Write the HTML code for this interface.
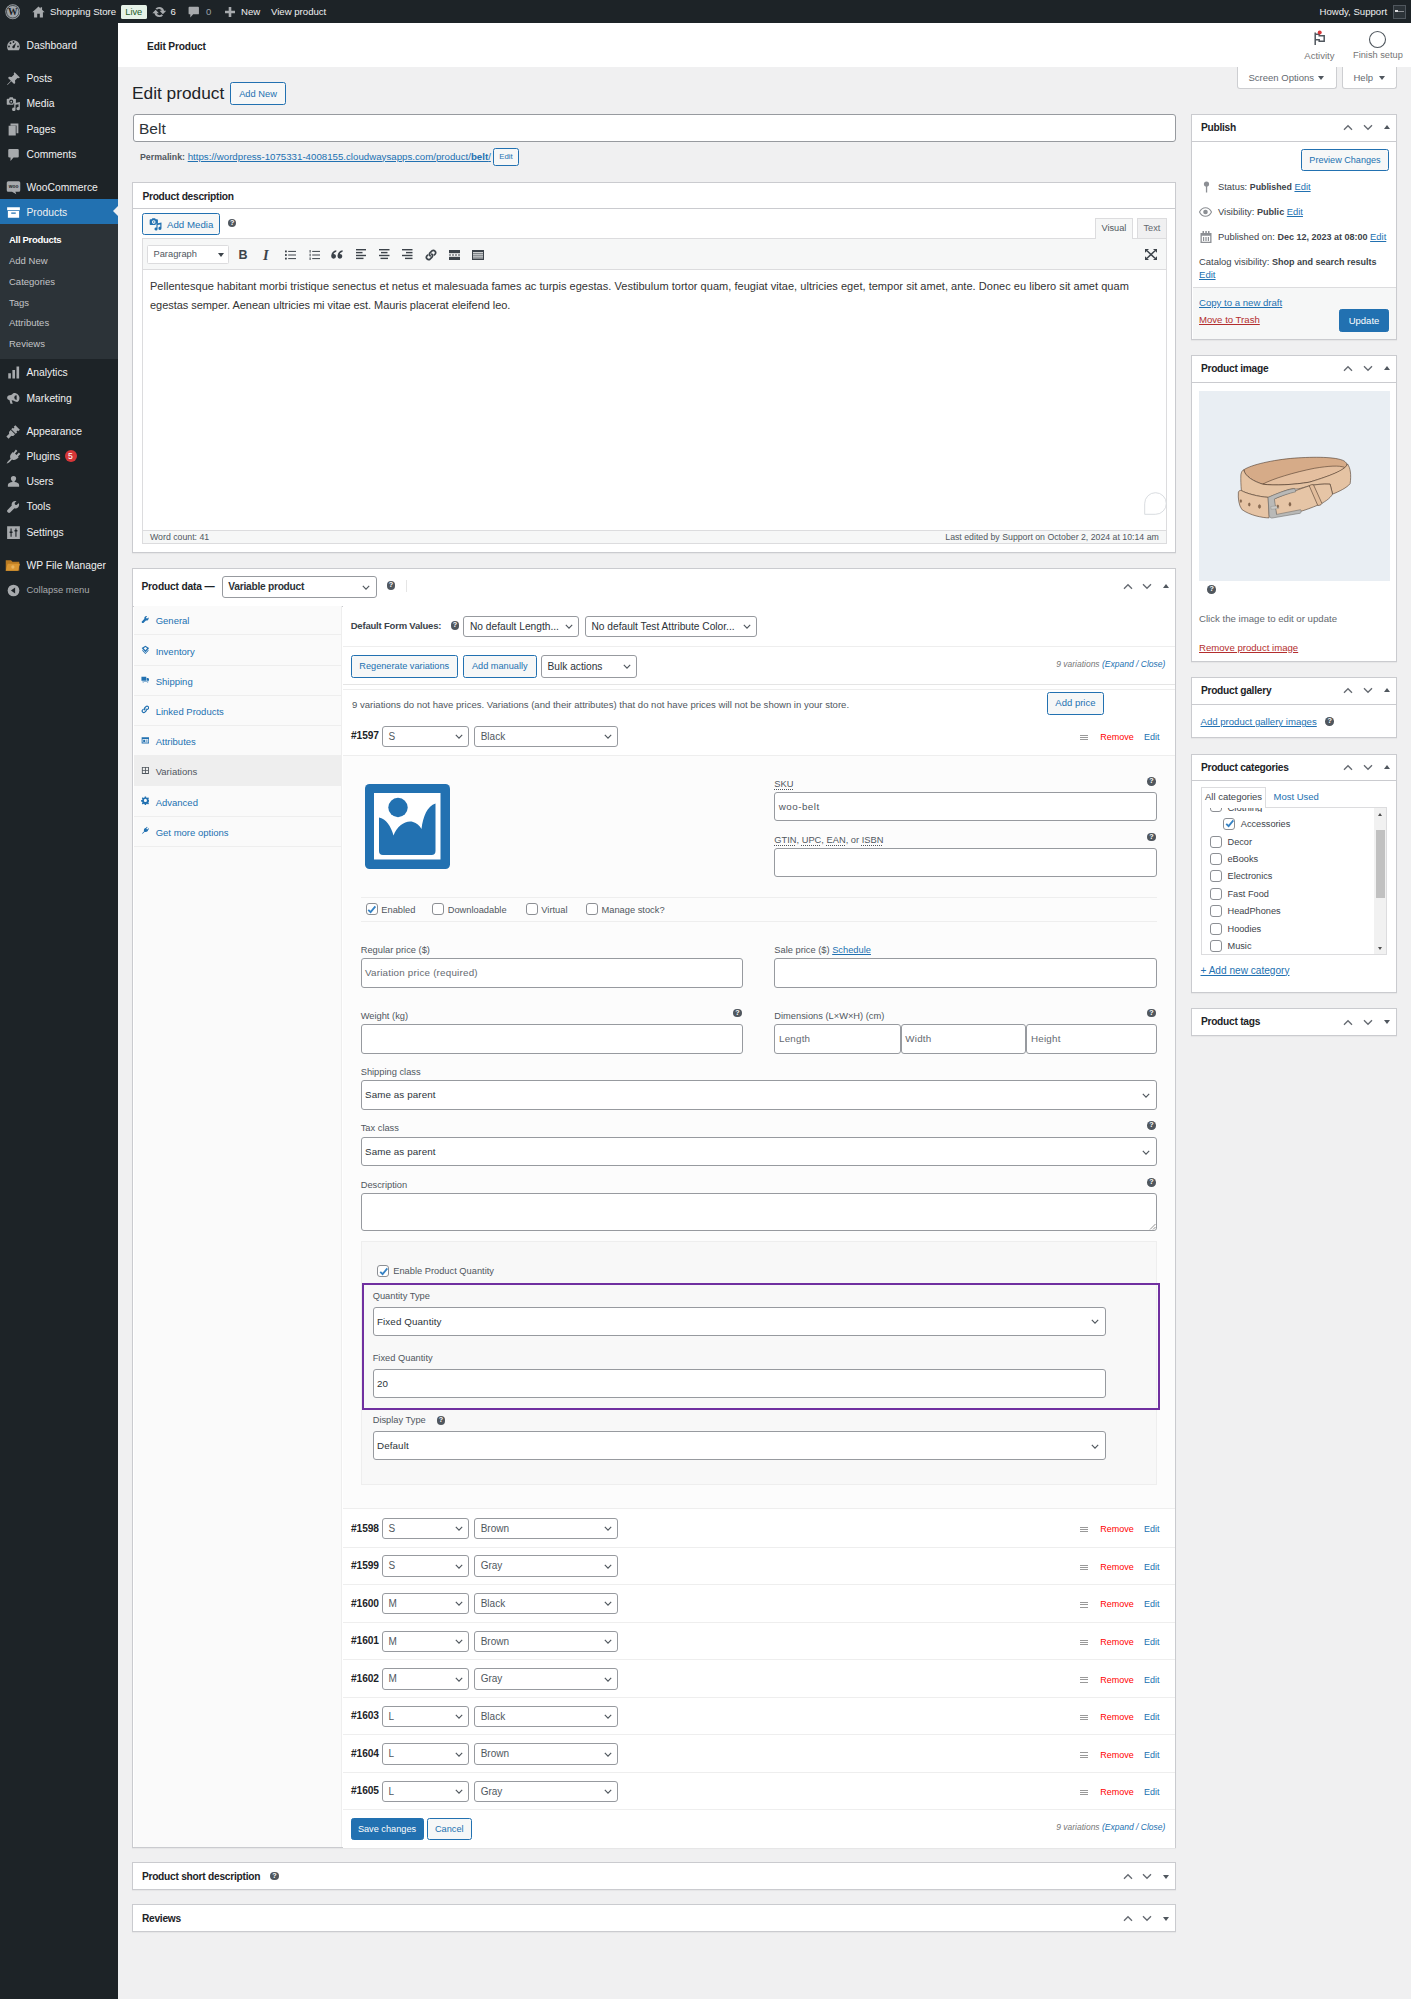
<!DOCTYPE html>
<html lang="en">
<head>
<meta charset="utf-8">
<title>Edit product ‹ Shopping Store — WordPress</title>
<style>
*{box-sizing:border-box;margin:0;padding:0}
html,body{width:1412px;height:1999px;overflow:hidden}
body{background:#f0f0f1;font-family:"Liberation Sans",sans-serif;font-size:9.5px;color:#3c434a;position:relative;line-height:1.2}
a{color:#2271b1;text-decoration:underline}
.abs{position:absolute}
.t{position:absolute;white-space:nowrap;line-height:1}
svg{display:block}
/* admin bar */
#adminbar{position:absolute;left:0;top:0;width:1411px;height:23px;background:#1d2327;color:#f0f0f1}
#adminbar .t{font-size:9.6px;color:#f0f0f1;top:7px}
/* sidebar */
#menu{position:absolute;left:0;top:23px;width:117.5px;height:1976px;background:#1d2327}
#menu .mi{position:absolute;left:0;width:117.5px;height:25px;color:#f0f0f1;font-size:10.3px}
#menu .mi .lbl{position:absolute;left:26.5px;top:8px;line-height:1;white-space:nowrap}
#menu .mi svg{position:absolute;left:6px;top:5px;width:15px;height:15px;fill:#a7aaad}
#menu .sub{position:absolute;left:0;top:201px;width:117.5px;height:135px;background:#2c3338}
#menu .sub .t{left:9px;font-size:9.5px;color:#c3c4c7}
/* boxes */
.box{position:absolute;background:#fff;border:1px solid #cacbcf;box-shadow:0 1px 1px rgba(0,0,0,.04)}
.box .hd{position:absolute;left:0;top:0;right:0;border-bottom:1px solid #cacbcf}
.box .hd .ttl{position:absolute;left:9px;font-weight:bold;font-size:10.2px;color:#1d2327;line-height:1;white-space:nowrap}
.inp{position:absolute;background:#fff;border:1px solid #979a9f;border-radius:3px}
.btn2{position:absolute;border:1px solid #2271b1;border-radius:2.5px;background:#f6f7f7;color:#2271b1;text-align:center;white-space:nowrap}
.btn1{position:absolute;border:1px solid #2271b1;border-radius:2.5px;background:#2271b1;color:#fff;text-align:center;white-space:nowrap}
.tip{position:absolute;width:8.600px;height:8.600px;margin:0.200px;border-radius:50%;background:#50575e;color:#fff;font-size:7.200px;font-weight:bold;line-height:8.800px;text-align:center}
.chev{position:absolute}
.cb{position:absolute;width:12px;height:12px;border:1px solid #8c8f94;border-radius:3px;background:#fff}
</style>
</head>
<body>
<div id="adminbar">
  <!-- wp logo -->
  <svg class="abs" style="left:4.800px;top:4px;width:15.500px;height:15.500px" viewBox="0 0 20 20"><circle cx="10" cy="10" r="9.600" fill="#a0a5aa"/><circle cx="10" cy="10" r="8.100" fill="none" stroke="#1d2327" stroke-width="0.900"/><text x="10" y="14.300" text-anchor="middle" font-family="Liberation Serif,serif" font-weight="bold" font-size="12.500" fill="#1d2327">W</text></svg>
  <!-- home -->
  <svg class="abs" style="left:32px;top:5.5px;width:13px;height:12px" viewBox="0 0 20 18"><path d="M10 0.5 L0.5 9.5 H3.2 V17.5 H8 V11.5 H12 V17.5 H16.8 V9.5 H19.5 L15.5 5.7 V1.5 H13.2 V3.5 Z" fill="#a7aaad"/></svg>
  <span class="t" style="left:50px">Shopping Store</span>
  <span class="abs" style="left:121px;top:5px;width:25.5px;height:13.5px;background:#e6f2e8;border-radius:1.5px;color:#1c5c27;font-size:9.300px;line-height:15px;text-align:center">Live</span>
  <!-- update -->
  <svg class="abs" style="left:151.500px;top:4.500px;width:14.500px;height:14px" viewBox="0 0 22 20"><path d="M11 2.500a7.500 7.500 0 0 1 7.300 5.700H21.500l-5 5.300-5-5.300h3.200a4 4 0 0 0-7-1.500L5.300 4.800A7.500 7.500 0 0 1 11 2.500zM11 17.500a7.500 7.500 0 0 1-7.300-5.700H0.500l5-5.300 5 5.300H7.300a4 4 0 0 0 7 1.500l2.400 1.900a7.500 7.500 0 0 1-5.700 2.300z" fill="#a7aaad"/></svg>
  <span class="t" style="left:170.5px">6</span>
  <!-- comment -->
  <svg class="abs" style="left:188px;top:6px;width:11.5px;height:12px" viewBox="0 0 20 20"><path d="M2.5 1h15A1.5 1.5 0 0 1 19 2.500v10a1.500 1.500 0 0 1-1.500 1.500H9l-5 5.500V14H2.500A1.500 1.500 0 0 1 1 12.500v-10A1.500 1.500 0 0 1 2.500 1z" fill="#a7aaad"/></svg>
  <span class="t" style="left:206px;color:#9ca2a7">0</span>
  <!-- plus -->
  <svg class="abs" style="left:224.5px;top:7px;width:10px;height:10px" viewBox="0 0 10 10"><path d="M3.7 0h2.6v3.700H10v2.600H6.300V10H3.700V6.300H0V3.700h3.700z" fill="#a7aaad"/></svg>
  <span class="t" style="left:241px">New</span>
  <span class="t" style="left:271px">View product</span>
  <span class="t" style="left:1319.5px">Howdy, Support</span>
  <span class="abs" style="left:1393px;top:4.500px;width:13px;height:14px;border:1px solid #50575e;background:#2c3338"></span>
  <span class="abs" style="left:1395px;top:10.5px;width:9px;height:1px;background:#8c8f94"></span>
  <span class="abs" style="left:1395px;top:10px;width:2.5px;height:2px;background:#dcdcde"></span>
</div>

<div id="menu">
<div class="abs" style="left:0;top:176px;width:117.5px;height:25px;background:#2271b1"></div>
<div class="abs" style="left:112.5px;top:183px;width:0;height:0;border:5.5px solid transparent;border-right-color:#f0f0f1;border-left-width:0"></div>
<div class="sub">
<span class="t" style="top:11.2px;font-weight:bold;color:#fff;letter-spacing:-0.3px;">All Products</span>
<span class="t" style="top:32.2px;">Add New</span>
<span class="t" style="top:53.2px;">Categories</span>
<span class="t" style="top:73.7px;">Tags</span>
<span class="t" style="top:94.2px;">Attributes</span>
<span class="t" style="top:114.7px;">Reviews</span>
</div>
<div class="mi" style="top:9.5px"><svg viewBox="0 0 20 20" style="fill:#a7aaad"><path d="M10 3a8.500 8.500 0 0 0-8.500 8.500c0 1.800.6 3.500 1.500 4.800h14c.9-1.300 1.500-3 1.500-4.800A8.500 8.500 0 0 0 10 3zM4 12.500a1.200 1.200 0 1 1 0-2.400 1.200 1.200 0 0 1 0 2.400zm2-4.300a1.200 1.200 0 1 1 0-2.400 1.200 1.200 0 0 1 0 2.400zM10 6.500a1.200 1.200 0 1 1 0-2.400 1.200 1.200 0 0 1 0 2.400zm1.300 6.800a1.800 1.800 0 0 1-2.600-2.400l4.800-4.600-2.200 7zM16 12.500a1.200 1.200 0 1 1 0-2.400 1.200 1.200 0 0 1 0 2.400z"/></svg><span class="lbl">Dashboard</span></div>
<div class="mi" style="top:42.5px"><svg viewBox="0 0 20 20" style="fill:#a7aaad"><path d="M11.500 1.500l7 7-1.500 1.200-1.700-.5-3.300 3.300.3 3.500-1.500 1.300-3.800-3.800L2 18.500l-.5-.5 5-5-3.800-3.800L4 7.700l3.500.3 3.300-3.300-.5-1.700z"/></svg><span class="lbl">Posts</span></div>
<div class="mi" style="top:67.5px"><svg viewBox="0 0 20 20" style="fill:#a7aaad"><path d="M2.200 3.500h1.800l1-1.700h4l1 1.700h2a1.200 1.200 0 0 1 1.200 1.200v5.300H9.800v1.800H2.200A1.200 1.200 0 0 1 1 10.600V4.700a1.200 1.200 0 0 1 1.200-1.200zM7 4.800a2.700 2.700 0 1 0 0 5.400 2.700 2.700 0 0 0 0-5.400zm0 1.500a1.200 1.200 0 1 1 0 2.400 1.200 1.200 0 0 1 0-2.400z" fill-rule="evenodd"/><path d="M11 9.500l7.500-1.500v8.800a2.300 2.300 0 1 1-1.800-2.200V11l-4 .8v6a2.300 2.300 0 1 1-1.700-2.200z"/></svg><span class="lbl">Media</span></div>
<div class="mi" style="top:93.5px"><svg viewBox="0 0 20 20" style="fill:#a7aaad"><path d="M6 2h10.500v13H14V4.500H6zM3.500 5H13v13H3.500z"/></svg><span class="lbl">Pages</span></div>
<div class="mi" style="top:118.5px"><svg viewBox="0 0 20 20" style="fill:#a7aaad"><path d="M4.500 2.500h11A1.500 1.500 0 0 1 17 4v8.500a1.500 1.500 0 0 1-1.500 1.500H10l-4 4.500V14H4.500A1.500 1.500 0 0 1 3 12.500V4a1.500 1.500 0 0 1 1.500-1.500z"/></svg><span class="lbl">Comments</span></div>
<div class="mi" style="top:151.5px"><svg viewBox="0 0 20 20" style="fill:#a7aaad"><path d="M3 1.500h14A2 2 0 0 1 19 3.500v10a2 2 0 0 1-2 2H12.500l1.200 3.500L8 15.500H3A2 2 0 0 1 1 13.500v-10A2 2 0 0 1 3 1.500z"/><text x="10" y="10.800" text-anchor="middle" font-size="6.500" font-weight="bold" fill="#1d2327" font-family="Liberation Sans,sans-serif">woo</text></svg><span class="lbl">WooCommerce</span></div>
<div class="mi" style="top:176.5px"><svg viewBox="0 0 20 20" style="fill:#fff"><path d="M1.500 3h17v4h-17zM2.500 8h15v9h-15zM7 10v1.800h6V10z" fill-rule="evenodd"/></svg><span class="lbl">Products</span></div>
<div class="mi" style="top:336.5px"><svg viewBox="0 0 20 20" style="fill:#a7aaad"><path d="M14 2h3.500v16H14zM8.500 6.500H12V18H8.500zM3 11h3.500v7H3z"/></svg><span class="lbl">Analytics</span></div>
<div class="mi" style="top:362.5px"><svg viewBox="0 0 20 20" style="fill:#a7aaad"><path d="M11 2.500c3.500 0 7 3 7 6.500s-1.500 5.500-3 5.500c-2 0-4.500-2-7.500-2.300L9 17H6l-1.500-5C2.500 11.500 1.500 10.500 1.500 9c0-2 1.500-3 3-3.200C8 5.500 9 2.500 11 2.500zm3.200 3a3.200 3.200 0 0 0 0 6.400z"/></svg><span class="lbl">Marketing</span></div>
<div class="mi" style="top:395.5px"><svg viewBox="0 0 20 20" style="fill:#a7aaad"><path d="M12.500 1.500l6 6-2.200 2.200-1-1-1.300 1.300 1 1L13 13l-6-6 2-2 1 1 1.300-1.300-1-1zM6.300 8l5.700 5.700-1.500 1.500c-1 1-2.500 1-3.500.5L3.500 19.500l-3-3L4.300 13c-.5-1-.5-2.500.5-3.500z"/></svg><span class="lbl">Appearance</span></div>
<div class="mi" style="top:420.5px"><svg viewBox="0 0 20 20" style="fill:#a7aaad"><path d="M13.200 0.800l2 2-3.200 3.200 2 2 3.200-3.200 2 2-3.200 3.200.9.900-1.800 1.800c-2 2-4.800 2.400-7 1.200L4.500 17.500c-.6.600-2.200 1-3.700 2.200.7-1.800 1.500-3 2.200-3.700L6.100 12.900c-1.200-2.200-.8-5 1.200-7l1.800-1.800.9.900z"/></svg><span class="lbl">Plugins</span><span class="abs" style="left:64.500px;top:6.500px;width:12px;height:12px;border-radius:6px;background:#d63638;color:#fff;font-size:8.600px;line-height:12.500px;text-align:center">5</span></div>
<div class="mi" style="top:445.5px"><svg viewBox="0 0 20 20" style="fill:#a7aaad"><path d="M10 2.500a3.500 3.500 0 0 1 3.500 3.500c0 1.500-.8 3-2 3.500v1c3 .3 6 1.500 6 4V17h-15v-2.500c0-2.500 3-3.700 6-4v-1c-1.200-.5-2-2-2-3.500A3.500 3.500 0 0 1 10 2.500z"/></svg><span class="lbl">Users</span></div>
<div class="mi" style="top:470.5px"><svg viewBox="0 0 20 20" style="fill:#a7aaad"><path d="M16.700 5.500l-2.500 2.500-2.200-.5-.5-2.200L14 2.800c-1.800-.6-3.800-.2-5.200 1.200C7.500 5.300 7.200 7.200 7.700 8.800L2 14.500c-.8.800-.8 2 0 2.800l.7.700c.8.800 2 .8 2.800 0l5.700-5.700c1.600.5 3.500.2 4.800-1.100 1.400-1.400 1.800-3.400 1.200-5.200z"/></svg><span class="lbl">Tools</span></div>
<div class="mi" style="top:496.5px"><svg viewBox="0 0 20 20" style="fill:#a7aaad"><path d="M1.500 1.500h17v17h-17zM6 4.500v4.200H4.800v2H6v4.800h1.500v-4.800h1.200v-2H7.500V4.500zM12.500 4.500v2.300h-1.200v2h1.200v6.700H14V8.800h1.200v-2H14V4.500z" fill-rule="evenodd"/></svg><span class="lbl">Settings</span></div>
<div class="mi" style="top:529.5px"><svg viewBox="0 0 20 20" style="left:4px;width:17px;height:15px"><path d="M1 3h7l2 2h9v12H1z" fill="#b87a22"/><path d="M3.500 7.500H20L17 17H1z" fill="#d99632"/><circle cx="10.500" cy="12" r="2.200" fill="#e9b45e"/></svg><span class="lbl">WP File Manager</span></div>
<div class="mi" style="top:554.5px;color:#a7aaad"><svg viewBox="0 0 20 20" style="left:6.500px;top:6px;width:13px;height:13px"><circle cx="10" cy="10" r="9" fill="#a7aaad"/><path d="M12.500 5.500v9L6 10z" fill="#1d2327"/></svg><span class="lbl" style="font-size:9.450px;top:7.500px">Collapse menu</span></div>
</div>
<div class="abs" style="left:117.5px;top:23px;width:1293.5px;height:44px;background:#fff"></div>
<span class="t" style="left:147px;top:41.500px;font-size:10.2px;font-weight:bold;color:#1d2327;letter-spacing:-0.15px">Edit Product</span>
<!-- activity -->
<svg class="abs" style="left:1313px;top:30px;width:14px;height:16px" viewBox="0 0 14 16"><path d="M2.200 2.500V15M2.200 4.200H6.200V5.700H11.200V11.200H6.200V9.700H2.200" fill="none" stroke="#50575e" stroke-width="1.500"/><circle cx="6.700" cy="2.500" r="2" fill="#d63638"/></svg>
<span class="t" style="left:1304.3px;top:51px;font-size:9.5px;color:#757575">Activity</span>
<svg class="abs" style="left:1368px;top:30px;width:19px;height:19px" viewBox="0 0 19 19"><circle cx="9.500" cy="9.500" r="8" fill="none" stroke="#50575e" stroke-width="1.100"/></svg>
<span class="t" style="left:1353px;top:51px;font-size:9.25px;color:#757575">Finish setup</span>
<!-- screen options / help -->
<div class="abs" style="left:1237px;top:67px;width:99.500px;height:21.500px;background:#fff;border:1px solid #cdced1;border-top:0;border-radius:0 0 3px 3px"></div>
<span class="t" style="left:1248.500px;top:72.500px;color:#646970">Screen Options</span>
<span class="abs" style="left:1318px;top:75.500px;border:3px solid transparent;border-top:4.500px solid #50575e;border-bottom:0"></span>
<div class="abs" style="left:1341.500px;top:67px;width:55px;height:21.500px;background:#fff;border:1px solid #cdced1;border-top:0;border-radius:0 0 3px 3px"></div>
<span class="t" style="left:1353.500px;top:72.500px;color:#646970">Help</span>
<span class="abs" style="left:1378.500px;top:75.500px;border:3px solid transparent;border-top:4.500px solid #50575e;border-bottom:0"></span>
<!-- h1 -->
<span class="t" style="left:132px;top:85px;font-size:17.300px;color:#1d2327">Edit product</span>
<div class="btn2" style="left:230px;top:82px;width:56px;height:22.500px;font-size:9.300px;line-height:22px">Add New</div>
<!-- title -->
<div class="inp" style="left:132.500px;top:114px;width:1043.500px;height:28px"></div>
<span class="t" style="left:139px;top:120.500px;font-size:15.500px;color:#2c3338">Belt</span>
<span class="t" style="left:140px;top:151.700px;font-size:9.700px;color:#646970"><b style="color:#50575e;font-size:8.800px">Permalink:</b> <a>https://wordpress-1075331-4008155.cloudwaysapps.com/product/<b>belt</b>/</a></span>
<div class="btn2" style="left:492.700px;top:147.500px;width:26.500px;height:18.500px;font-size:7.800px;line-height:16.500px">Edit</div>

<!--RIGHTSTRIP--><div class="abs" style="left:1411px;top:0;width:1px;height:1999px;background:#fff;z-index:5"></div>

<!-- Product description box -->
<div class="box" style="left:132.400px;top:182px;width:1043.500px;height:370.500px">
  <div class="hd" style="height:26px"><span class="ttl" style="top:8.700px;letter-spacing:-0.26px">Product description</span></div>
</div>
<div class="btn2" style="left:141.500px;top:213px;width:78px;height:21.500px"></div>
<svg class="abs" style="left:148.500px;top:217px;width:13.500px;height:13.500px" viewBox="0 0 20 20" fill="#2271b1"><path d="M2.200 3.500h1.800l1-1.700h4l1 1.700h2a1.200 1.200 0 0 1 1.200 1.200v5.300H9.800v1.800H2.200A1.200 1.200 0 0 1 1 10.600V4.700a1.200 1.200 0 0 1 1.200-1.200zM7 4.800a2.700 2.700 0 1 0 0 5.400 2.700 2.700 0 0 0 0-5.400zm0 1.500a1.200 1.200 0 1 1 0 2.400 1.200 1.200 0 0 1 0-2.400z" fill-rule="evenodd"/><path d="M11 9.500l7.500-1.500v8.800a2.300 2.300 0 1 1-1.800-2.200V11l-4 .8v6a2.300 2.300 0 1 1-1.700-2.200z"/></svg>
<span class="t" style="left:167px;top:219.700px;font-size:9.700px;color:#2271b1">Add Media</span>
<span class="tip" style="left:227.700px;top:218.700px">?</span>
<!-- tabs -->
<div class="abs" style="left:1094.500px;top:218px;width:38.500px;height:21px;background:#f6f7f7;border:1px solid #dcdcde;border-bottom:0"></div>
<span class="t" style="left:1101.500px;top:223.500px;font-size:9.200px;color:#50575e">Visual</span>
<div class="abs" style="left:1136.500px;top:218px;width:30px;height:20px;background:#f0f0f1;border:1px solid #dcdcde;border-bottom:0"></div>
<span class="t" style="left:1143.500px;top:223.500px;font-size:9.200px;color:#646970">Text</span>
<!-- editor -->
<div class="abs" style="left:141.500px;top:238px;width:1025px;height:305.500px;border:1px solid #dcdcde;background:#fff"></div>
<div class="abs" style="left:142.500px;top:239px;width:1023px;height:30.500px;background:#f6f7f7;border-bottom:1px solid #dcdcde"></div>
<div class="abs" style="left:1095.500px;top:237.500px;width:36.500px;height:2px;background:#f6f7f7"></div>
<div class="abs" style="left:147px;top:244.500px;width:81.500px;height:19px;background:#fff;border:1px solid #dcdcde;border-radius:1.500px"></div>
<span class="t" style="left:153.500px;top:249.500px;font-size:9.300px;color:#50575e">Paragraph</span>
<span class="abs" style="left:218px;top:252.500px;border:3px solid transparent;border-top:4.500px solid #3c434a;border-bottom:0"></span>
<span class="t" style="left:238.500px;top:248.500px;font-size:12.500px;font-weight:bold;color:#3c434a">B</span>
<span class="t" style="left:263px;top:247.500px;font-size:14.500px;font-weight:bold;font-style:italic;font-family:Liberation Serif,serif;color:#3c434a">I</span>
<svg class="abs" style="left:284.8px;top:249.5px;width:11px;height:10px" viewBox="0 0 11 10"><g fill="#3c434a"><rect x="0" y="0.500" width="1.800" height="1.800"/><rect x="0" y="4.100" width="1.800" height="1.800"/><rect x="0" y="7.700" width="1.800" height="1.800"/><rect x="3.200" y="0.900" width="7.800" height="1"/><rect x="3.200" y="4.500" width="7.800" height="1"/><rect x="3.200" y="8.100" width="7.800" height="1"/></g></svg>
<svg class="abs" style="left:308.5px;top:249.5px;width:11px;height:10px" viewBox="0 0 11 10"><g fill="#3c434a"><rect x="0.600" y="0" width="1" height="2.600"/><rect x="0.600" y="3.700" width="1" height="2.600"/><rect x="0.600" y="7.400" width="1" height="2.600"/><rect x="3.200" y="0.900" width="7.800" height="1"/><rect x="3.200" y="4.500" width="7.800" height="1"/><rect x="3.200" y="8.100" width="7.800" height="1"/></g></svg>
<svg class="abs" style="left:330.8px;top:250.0px;width:12px;height:9px" viewBox="0 0 12 9"><path d="M0.2 6.3C0.2 2.7 2.4 0.7 5.3 0.3L5.3 1.7C3.8 2.1 2.8 3.1 2.6 3.9A2.4 2.4 0 1 1 0.2 6.3zM6.5 6.3C6.5 2.7 8.7 0.7 11.6 0.3L11.6 1.7C10.1 2.1 9.1 3.1 8.9 3.9A2.4 2.4 0 1 1 6.5 6.3z" fill="#3c434a"/></svg>
<svg class="abs" style="left:355.6px;top:249.4px;width:10.5px;height:10.2px" viewBox="0 0 10.5 10.2"><g fill="#3c434a"><rect x="0" y="0.0" width="10.5" height="1.400"/><rect x="0" y="2.9" width="6.5" height="1.400"/><rect x="0" y="5.8" width="10.5" height="1.400"/><rect x="0" y="8.7" width="7.5" height="1.400"/></g></svg>
<svg class="abs" style="left:379.1px;top:249.4px;width:10.5px;height:10.2px" viewBox="0 0 10.5 10.2"><g fill="#3c434a"><rect x="0.0" y="0.0" width="10.5" height="1.400"/><rect x="2.0" y="2.9" width="6.5" height="1.400"/><rect x="0.0" y="5.8" width="10.5" height="1.400"/><rect x="1.5" y="8.7" width="7.5" height="1.400"/></g></svg>
<svg class="abs" style="left:402.4px;top:249.4px;width:10.5px;height:10.2px" viewBox="0 0 10.5 10.2"><g fill="#3c434a"><rect x="0.0" y="0.0" width="10.5" height="1.400"/><rect x="4.0" y="2.9" width="6.5" height="1.400"/><rect x="0.0" y="5.8" width="10.5" height="1.400"/><rect x="3.0" y="8.7" width="7.5" height="1.400"/></g></svg>
<svg class="abs" style="left:424.8px;top:248.5px;width:12px;height:12px" viewBox="0 0 12 12"><g fill="none" stroke="#3c434a" stroke-width="1.700" stroke-linecap="round"><path d="M5.200 6.800a2.300 2.300 0 0 1 0-3.200l1.800-1.800a2.300 2.300 0 0 1 3.200 3.200l-0.900 0.900"/><path d="M6.800 5.200a2.300 2.300 0 0 1 0 3.200l-1.800 1.800a2.300 2.300 0 0 1-3.200-3.200l0.900-0.900"/></g></svg>
<svg class="abs" style="left:448.9px;top:249.5px;width:11px;height:10px" viewBox="0 0 11 10"><g fill="#3c434a"><rect x="0" y="0" width="11" height="3.200"/><rect x="0" y="6.800" width="11" height="3.200"/><rect x="0" y="4.500" width="2" height="1"/><rect x="3" y="4.500" width="2" height="1"/><rect x="6" y="4.500" width="2" height="1"/><rect x="9" y="4.500" width="2" height="1"/></g></svg>
<svg class="abs" style="left:471.6px;top:249.5px;width:12px;height:10px" viewBox="0 0 12 10"><g fill="#3c434a"><rect x="0" y="0" width="12" height="2"/><rect x="0" y="2.700" width="12" height="1.200" opacity=".7"/><rect x="0" y="4.600" width="12" height="1.200" opacity=".7"/><rect x="0" y="6.500" width="12" height="1.200" opacity=".7"/><rect x="0" y="8.400" width="12" height="1.600"/><rect x="0" y="0" width="1" height="10"/><rect x="11" y="0" width="1" height="10"/></g></svg>
<svg class="abs" style="left:1144.8px;top:249.0px;width:12px;height:11px" viewBox="0 0 12 11"><g stroke="#3c434a" stroke-width="1.500" fill="#3c434a"><path d="M2 1.800L10 9.200M10 1.800L2 9.200" fill="none"/><path d="M0 0h4L0 3.800zM12 0v3.800L8 0zM0 11v-3.800L4 11zM12 11h-4L12 7.200z" stroke="none"/></g></svg>
<span class="t" style="left:150px;top:281px;font-size:11px;letter-spacing:0.03px;color:#333">Pellentesque habitant morbi tristique senectus et netus et malesuada fames ac turpis egestas. Vestibulum tortor quam, feugiat vitae, ultricies eget, tempor sit amet, ante. Donec eu libero sit amet quam</span>
<span class="t" style="left:150px;top:300px;font-size:11px;letter-spacing:-0.045px;color:#333">egestas semper. Aenean ultricies mi vitae est. Mauris placerat eleifend leo.</span>
<!-- bubble -->
<svg class="abs" style="left:1143.500px;top:492px;width:23px;height:23px" viewBox="0 0 23 23"><path d="M11.500 0.700A10.800 10.800 0 1 1 11.500 22.300H0.700V11.500A10.800 10.800 0 0 1 11.500 0.700z" fill="#fff" stroke="#d5d8dc" stroke-width="0.900"/></svg>
<!-- status -->
<div class="abs" style="left:142.500px;top:530px;width:1023px;height:12.500px;background:#f6f7f7;border-top:1px solid #dcdcde"></div>
<span class="t" style="left:150px;top:533px;font-size:8.750px;color:#50575e">Word count: 41</span>
<span class="t" style="right:253.200px;top:533px;font-size:8.750px;color:#50575e">Last edited by Support on October 2, 2024 at 10:14 am</span>
<div class="box" style="left:132.400px;top:567.500px;width:1043.500px;height:1280.500px"><div class="hd" style="height:38.500px"><span class="ttl" style="left:8px;top:13.500px;letter-spacing:-0.15px">Product data —</span></div></div>
<div class="inp" style="left:221.700px;top:576px;width:155px;height:21.500px"></div>
<span class="t" style="left:228.300px;top:581.500px;font-size:10.200px;font-weight:bold;color:#2c3338;letter-spacing:-0.25px">Variable product</span>
<svg class="abs" style="left:361.7px;top:584.5px;width:8px;height:5.500px" viewBox="0 0 8 5.500"><path d="M0.800 0.900L4 4.200L7.200 0.900" fill="none" stroke="#50575e" stroke-width="1.150"/></svg>
<span class="tip" style="left:386.500px;top:581.300px">?</span>
<div class="abs" style="left:406px;top:580px;width:1px;height:12px;background:#e5e5e5"></div>
<svg class="abs" style="left:1123.0px;top:583.3px;width:10px;height:7px" viewBox="0 0 10 7"><path d="M1 5.800L5 1.700L9 5.800" fill="none" stroke="#646970" stroke-width="1.300"/></svg><svg class="abs" style="left:1141.7px;top:583.3px;width:10px;height:7px" viewBox="0 0 10 7"><path d="M1 1.200L5 5.300L9 1.200" fill="none" stroke="#646970" stroke-width="1.300"/></svg><span class="abs" style="left:1163.3px;top:584.3px;border:3px solid transparent;border-bottom:4.500px solid #50575e;border-top:0"></span>
<div class="abs" style="left:133.500px;top:606px;width:208px;height:1241px;background:#fafafa;border-right:1px solid #eee"></div>
<div class="abs" style="left:133.500px;top:605.4px;width:208px;height:30px;border-bottom:1px solid #eee"></div>
<svg class="abs" style="left:140.600px;top:614.7px;width:8.800px;height:8.800px" viewBox="0 0 20 20" fill="#2271b1" ><path d="M16.700 5.500l-2.500 2.500-2.200-.5-.5-2.200L14 2.800c-1.800-.6-3.800-.2-5.200 1.200C7.500 5.300 7.200 7.200 7.700 8.800L2 14.500c-.8.800-.8 2 0 2.800l.7.700c.8.800 2 .8 2.800 0l5.700-5.700c1.600.5 3.500.2 4.800-1.100 1.400-1.400 1.800-3.400 1.200-5.200z"/></svg>
<span class="t" style="left:155.700px;top:616.4px;font-size:9.500px;color:#2271b1">General</span>
<div class="abs" style="left:133.500px;top:635.6px;width:208px;height:30px;border-bottom:1px solid #eee"></div>
<svg class="abs" style="left:140.600px;top:644.9px;width:8.800px;height:8.800px" viewBox="0 0 20 20" fill="#2271b1" ><path d="M10 1.500L18.500 7 10 16.500 1.500 7zM10 4.500L6 7.200l4 4.500 4-4.500zM3 10.500l7 7.500 7-7.500v2.500L10 20.500 3 13z"/></svg>
<span class="t" style="left:155.700px;top:646.6px;font-size:9.500px;color:#2271b1">Inventory</span>
<div class="abs" style="left:133.500px;top:665.8px;width:208px;height:30px;border-bottom:1px solid #eee"></div>
<svg class="abs" style="left:140.600px;top:675.1px;width:8.800px;height:8.800px" viewBox="0 0 20 20" fill="#2271b1" ><path d="M1 4h11v9H1zM13 7h3.500L19 10v3h-6zM3 14h14v1.500H3zM5 17a1.800 1.800 0 1 0 0-3.600A1.800 1.800 0 0 0 5 17zm10 0a1.800 1.800 0 1 0 0-3.600 1.800 1.800 0 0 0 0 3.600z"/></svg>
<span class="t" style="left:155.700px;top:676.8px;font-size:9.500px;color:#2271b1">Shipping</span>
<div class="abs" style="left:133.500px;top:696.0px;width:208px;height:30px;border-bottom:1px solid #eee"></div>
<svg class="abs" style="left:140.600px;top:705.3px;width:8.800px;height:8.800px" viewBox="0 0 20 20" fill="#2271b1" stroke="#2271b1"><g fill="none" stroke-width="2.600" stroke-linecap="round"><path d="M8.700 11.300a3.500 3.500 0 0 1 0-5l2.500-2.500a3.500 3.500 0 0 1 5 5l-1.300 1.300"/><path d="M11.300 8.700a3.500 3.500 0 0 1 0 5l-2.500 2.500a3.500 3.500 0 0 1-5-5l1.300-1.300"/></g></svg>
<span class="t" style="left:155.700px;top:707.0px;font-size:9.500px;color:#2271b1">Linked Products</span>
<div class="abs" style="left:133.500px;top:726.2px;width:208px;height:30px;border-bottom:1px solid #eee"></div>
<svg class="abs" style="left:140.600px;top:735.5px;width:8.800px;height:8.800px" viewBox="0 0 20 20" fill="#2271b1" ><path d="M1.500 3h17v14h-17zM3.500 7v8h13V7zM5 8.500h4.500v5H5zM11 8.500h4v1.300h-4zM11 11h4v1.300h-4z" fill-rule="evenodd"/></svg>
<span class="t" style="left:155.700px;top:737.2px;font-size:9.500px;color:#2271b1">Attributes</span>
<div class="abs" style="left:133.500px;top:756.4px;width:208px;height:30px;background:#eee;border-bottom:1px solid #eee"></div>
<svg class="abs" style="left:140.600px;top:765.7px;width:8.800px;height:8.800px" viewBox="0 0 20 20" fill="#50575e" ><path d="M2 2h16v16H2zM4 4v5h5V4zM11 4v5h5V4zM4 11v5h5v-5zM11 11v5h5v-5z" fill-rule="evenodd"/></svg>
<span class="t" style="left:155.700px;top:767.4px;font-size:9.500px;color:#50575e">Variations</span>
<div class="abs" style="left:133.500px;top:786.6px;width:208px;height:30px;border-bottom:1px solid #eee"></div>
<svg class="abs" style="left:140.600px;top:795.9px;width:8.800px;height:8.800px" viewBox="0 0 20 20" fill="#2271b1" ><path d="M10 6.500a3.500 3.500 0 1 0 0 7 3.500 3.500 0 0 0 0-7zM8.500 1h3l.5 2.500 1.800.8 2.200-1.500 2.100 2.100-1.400 2.200.7 1.800 2.600.6v3l-2.600.5-.7 1.800 1.400 2.200-2.100 2.100-2.200-1.400-1.800.7-.5 2.600h-3l-.5-2.600-1.800-.7-2.200 1.400-2.100-2.100 1.400-2.200-.7-1.800L0 12.500v-3L2.600 9l.7-1.800L1.900 5 4 2.900l2.200 1.400L8 3.600z" fill-rule="evenodd"/></svg>
<span class="t" style="left:155.700px;top:797.6px;font-size:9.500px;color:#2271b1">Advanced</span>
<div class="abs" style="left:133.500px;top:816.8px;width:208px;height:30px;border-bottom:1px solid #eee"></div>
<svg class="abs" style="left:140.600px;top:826.1px;width:8.800px;height:8.800px" viewBox="0 0 20 20" fill="#2271b1" ><path d="M13.500 1.500l1.500 1.500-3 3 2 2 3-3L18.500 6.500l-3 3 .8.800-1.500 1.500c-1.800 1.800-4.300 2.200-6.300 1.200L5 16.500c-.5.500-2 1-3 2 .5-1.500 1-2.500 1.700-3.200L7 12c-1-2-.6-4.500 1.200-6.300L9.700 4.200l.8.800z"/></svg>
<span class="t" style="left:155.700px;top:827.8px;font-size:9.500px;color:#2271b1">Get more options</span>
<div class="abs" style="left:342.500px;top:606px;width:832.500px;height:40.500px;background:#fff;border-bottom:1px solid #eee"></div>
<span class="t" style="left:350.700px;top:620.500px;font-size:9.500px;font-weight:bold;color:#3c434a;letter-spacing:-0.2px">Default Form Values:</span>
<span class="tip" style="left:450.500px;top:621px">?</span>
<div class="inp" style="left:463px;top:615.500px;width:115.700px;height:21.500px"></div>
<span class="t" style="left:470px;top:621.500px;font-size:10.200px;color:#2c3338">No default Length...</span>
<svg class="abs" style="left:564.5px;top:624.0px;width:8px;height:5.500px" viewBox="0 0 8 5.500"><path d="M0.800 0.900L4 4.200L7.200 0.900" fill="none" stroke="#50575e" stroke-width="1.150"/></svg>
<div class="inp" style="left:584.500px;top:615.500px;width:172px;height:21.500px"></div>
<span class="t" style="left:591.500px;top:621.500px;font-size:10.200px;color:#2c3338">No default Test Attribute Color...</span>
<svg class="abs" style="left:742.5px;top:624.0px;width:8px;height:5.500px" viewBox="0 0 8 5.500"><path d="M0.800 0.900L4 4.200L7.200 0.900" fill="none" stroke="#50575e" stroke-width="1.150"/></svg>
<div class="abs" style="left:342.500px;top:647px;width:832.500px;height:38px;background:#fff;border-bottom:1px solid #e5e5e5"></div>
<div class="abs" style="left:342.500px;top:685px;width:832.500px;height:4.500px;background:#fff;border-bottom:1px solid #eee"></div>
<div class="btn2" style="left:351px;top:655px;width:106.500px;height:22.500px;font-size:9.200px;line-height:20.500px">Regenerate variations</div>
<div class="btn2" style="left:462.500px;top:655px;width:74.500px;height:22.500px;font-size:9.200px;line-height:20.500px">Add manually</div>
<div class="inp" style="left:541.200px;top:655px;width:96px;height:22.500px"></div>
<span class="t" style="left:547.500px;top:662px;font-size:10.200px;color:#2c3338">Bulk actions</span>
<svg class="abs" style="left:623.0px;top:664.0px;width:8px;height:5.500px" viewBox="0 0 8 5.500"><path d="M0.800 0.900L4 4.200L7.200 0.900" fill="none" stroke="#50575e" stroke-width="1.150"/></svg>
<span class="t" style="right:246.700px;top:659.500px;font-size:8.500px;font-style:italic;color:#777">9 variations <span style="color:#2271b1">(Expand / Close)</span></span>
<div class="abs" style="left:342.500px;top:690px;width:832.500px;height:66px;background:#fff"></div>
<span class="t" style="left:352px;top:700px;font-size:9.560px;color:#50575e">9 variations do not have prices. Variations (and their attributes) that do not have prices will not be shown in your store.</span>
<div class="btn2" style="left:1046.700px;top:692.400px;width:57.500px;height:22.300px;font-size:9.500px;line-height:20.300px">Add price</div><span class="t" style="left:351px;top:731.4px;font-size:10.200px;font-weight:bold;color:#1d2327;letter-spacing:-0.1px">#1597</span><div class="inp" style="left:382px;top:725.7px;width:87px;height:21.500px"></div><span class="t" style="left:388.500px;top:731.7px;font-size:10px;color:#50575e">S</span><svg class="abs" style="left:454.5px;top:734.2px;width:8px;height:5.500px" viewBox="0 0 8 5.500"><path d="M0.800 0.900L4 4.200L7.200 0.900" fill="none" stroke="#50575e" stroke-width="1.150"/></svg><div class="inp" style="left:474.200px;top:725.7px;width:144px;height:21.500px"></div><span class="t" style="left:480.700px;top:731.7px;font-size:10px;color:#50575e">Black</span><svg class="abs" style="left:603.5px;top:734.2px;width:8px;height:5.500px" viewBox="0 0 8 5.500"><path d="M0.800 0.900L4 4.200L7.200 0.900" fill="none" stroke="#50575e" stroke-width="1.150"/></svg><div class="abs" style="left:1079.500px;top:735.0px;width:8.300px;height:5.400px;border-top:1px solid #999;border-bottom:1px solid #999"><div style="margin-top:1.200px;height:1px;background:#999"></div></div><span class="t" style="left:1100.300px;top:733.2px;font-size:9px;color:#f00">Remove</span><span class="t" style="left:1144px;top:733.2px;font-size:9px;color:#2271b1">Edit</span>
<div class="abs" style="left:342.500px;top:755.300px;width:832.500px;height:754px;background:#fcfcfc;border-top:1px solid #eee;border-bottom:1px solid #eee"></div>
<svg class="abs" style="left:365px;top:783.700px;width:85px;height:85px" viewBox="0 0 85 85"><rect x="0" y="0" width="85" height="85" rx="4.500" fill="#2271b1"/><rect x="9" y="9" width="66.500" height="66.500" fill="#fff"/><circle cx="33" cy="23.500" r="9.700" fill="#2271b1"/><path d="M14 33.500C21 35 26 42 28.500 51.500C32 42 41 36 48 38C51.500 39 54.500 41.500 56.500 45C58 32 62.500 22 70.500 19.500V67a4 4 0 0 1-4 4H18a4 4 0 0 1-4-4z" fill="#2271b1"/></svg>
<span class="t" style="left:774.300px;top:780px;font-size:9.300px;color:#50575e;text-decoration:underline dotted;text-underline-offset:1.500px">SKU</span>
<span class="tip" style="left:1146.9px;top:776.8px">?</span>
<div class="inp" style="left:774.300px;top:792px;width:382.500px;height:29px"></div>
<span class="t" style="left:778.700px;top:801.500px;font-size:9.800px;letter-spacing:0.5px;color:#50575e">woo-belt</span>
<span class="t" style="left:774.300px;top:835.500px;font-size:9.300px;color:#50575e"><span style="text-decoration:underline dotted;text-underline-offset:1.500px">GTIN</span>, <span style="text-decoration:underline dotted;text-underline-offset:1.500px">UPC</span>, <span style="text-decoration:underline dotted;text-underline-offset:1.500px">EAN</span>, or <span style="text-decoration:underline dotted;text-underline-offset:1.500px">ISBN</span></span>
<span class="tip" style="left:1146.9px;top:832.7px">?</span>
<div class="inp" style="left:774.300px;top:848.200px;width:382.500px;height:29px"></div>
<div class="abs" style="left:361px;top:897px;width:796px;height:25px;border-top:1px solid #eee;border-bottom:1px solid #eee"></div>
<span class="cb" style="left:365.7px;top:903px"></span><svg class="abs" style="left:367.2px;top:904.5px;width:9.500px;height:9px" viewBox="0 0 10 9"><path d="M1.300 4.800L3.800 7.300L8.800 1.200" fill="none" stroke="#3582c4" stroke-width="1.900"/></svg>
<span class="t" style="left:381.300px;top:906px;font-size:9.300px;color:#50575e">Enabled</span>
<span class="cb" style="left:432px;top:903px"></span>
<span class="t" style="left:447.700px;top:906px;font-size:9.300px;color:#50575e">Downloadable</span>
<span class="cb" style="left:525.5px;top:903px"></span>
<span class="t" style="left:541.300px;top:906px;font-size:9.300px;color:#50575e">Virtual</span>
<span class="cb" style="left:585.7px;top:903px"></span>
<span class="t" style="left:601.500px;top:906px;font-size:9.300px;color:#50575e">Manage stock?</span>
<span class="t" style="left:360.700px;top:946px;font-size:9.300px;color:#50575e">Regular price ($)</span>
<div class="inp" style="left:361.200px;top:958px;width:381.500px;height:29.500px"></div>
<span class="t" style="left:365px;top:967.500px;font-size:9.800px;letter-spacing:0.22px;color:#646970">Variation price (required)</span>
<span class="t" style="left:774.300px;top:946px;font-size:9.300px;color:#50575e">Sale price ($) <a>Schedule</a></span>
<div class="inp" style="left:774.300px;top:958px;width:382.500px;height:29.500px"></div>
<span class="t" style="left:360.700px;top:1011.500px;font-size:9.300px;color:#50575e">Weight (kg)</span>
<span class="tip" style="left:733.0px;top:1008.5px">?</span>
<div class="inp" style="left:361.200px;top:1024px;width:381.500px;height:29.500px"></div>
<span class="t" style="left:774.300px;top:1011.500px;font-size:9.300px;color:#50575e">Dimensions (L×W×H) (cm)</span>
<span class="tip" style="left:1146.9px;top:1008.5px">?</span>
<div class="inp" style="left:774.300px;top:1024px;width:126.300px;height:29.500px"></div>
<span class="t" style="left:779px;top:1034px;font-size:9.800px;letter-spacing:0.22px;color:#646970">Length</span>
<div class="inp" style="left:900.600px;top:1024px;width:125.700px;height:29.500px"></div>
<span class="t" style="left:905.300px;top:1034px;font-size:9.800px;letter-spacing:0.22px;color:#646970">Width</span>
<div class="inp" style="left:1026.300px;top:1024px;width:130.500px;height:29.500px"></div>
<span class="t" style="left:1031px;top:1034px;font-size:9.800px;letter-spacing:0.22px;color:#646970">Height</span>
<span class="t" style="left:360.700px;top:1068px;font-size:9.300px;color:#50575e">Shipping class</span>
<div class="inp" style="left:361.200px;top:1080px;width:795.600px;height:29.700px"></div>
<span class="t" style="left:365px;top:1090px;font-size:9.800px;letter-spacing:0.1px;color:#2c3338">Same as parent</span>
<svg class="abs" style="left:1142.3px;top:1093.0px;width:8px;height:5.500px" viewBox="0 0 8 5.500"><path d="M0.800 0.900L4 4.200L7.200 0.900" fill="none" stroke="#50575e" stroke-width="1.150"/></svg>
<span class="t" style="left:360.700px;top:1124px;font-size:9.300px;color:#50575e">Tax class</span>
<span class="tip" style="left:1146.9px;top:1121.2px">?</span>
<div class="inp" style="left:361.200px;top:1136.800px;width:795.600px;height:29.700px"></div>
<span class="t" style="left:365px;top:1146.700px;font-size:9.800px;letter-spacing:0.1px;color:#2c3338">Same as parent</span>
<svg class="abs" style="left:1142.3px;top:1149.7px;width:8px;height:5.500px" viewBox="0 0 8 5.500"><path d="M0.800 0.900L4 4.200L7.200 0.900" fill="none" stroke="#50575e" stroke-width="1.150"/></svg>
<span class="t" style="left:360.700px;top:1180.500px;font-size:9.300px;color:#50575e">Description</span>
<span class="tip" style="left:1146.9px;top:1177.8px">?</span>
<div class="inp" style="left:361.200px;top:1193px;width:795.600px;height:37.500px"></div>
<svg class="abs" style="left:1148.500px;top:1222.500px;width:7px;height:7px" viewBox="0 0 7 7"><path d="M6.500 1L1 6.500M6.500 4L4 6.500" stroke="#777" stroke-width="0.800" fill="none"/></svg>
<div class="abs" style="left:361.200px;top:1240.700px;width:795.600px;height:244.500px;background:#f8f8f8;border:1px solid #eee"></div>
<span class="cb" style="left:377px;top:1265px"></span><svg class="abs" style="left:378.5px;top:1266.5px;width:9.500px;height:9px" viewBox="0 0 10 9"><path d="M1.300 4.800L3.800 7.300L8.800 1.200" fill="none" stroke="#3582c4" stroke-width="1.900"/></svg>
<span class="t" style="left:393.200px;top:1266.500px;font-size:9.300px;color:#50575e">Enable Product Quantity</span>
<div class="abs" style="left:362px;top:1282.500px;width:798px;height:127px;border:2px solid #7030a0"></div>
<span class="t" style="left:372.700px;top:1292px;font-size:9.300px;color:#50575e">Quantity Type</span>
<div class="inp" style="left:373px;top:1306.500px;width:732.700px;height:29px"></div>
<span class="t" style="left:377px;top:1316.500px;font-size:9.800px;letter-spacing:0.1px;color:#2c3338">Fixed Quantity</span>
<svg class="abs" style="left:1091.2px;top:1319.0px;width:8px;height:5.500px" viewBox="0 0 8 5.500"><path d="M0.800 0.900L4 4.200L7.200 0.900" fill="none" stroke="#50575e" stroke-width="1.150"/></svg>
<span class="t" style="left:372.700px;top:1353.500px;font-size:9.300px;color:#50575e">Fixed Quantity</span>
<div class="inp" style="left:373px;top:1368.700px;width:732.700px;height:29.500px"></div>
<span class="t" style="left:377px;top:1379px;font-size:9.800px;letter-spacing:0.1px;color:#2c3338">20</span>
<span class="t" style="left:372.700px;top:1416px;font-size:9.300px;color:#50575e">Display Type</span>
<span class="tip" style="left:436.5px;top:1416.0px">?</span>
<div class="inp" style="left:373px;top:1431.200px;width:732.700px;height:28.500px"></div>
<span class="t" style="left:377px;top:1441px;font-size:9.800px;letter-spacing:0.1px;color:#2c3338">Default</span>
<svg class="abs" style="left:1091.2px;top:1443.5px;width:8px;height:5.500px" viewBox="0 0 8 5.500"><path d="M0.800 0.900L4 4.200L7.200 0.900" fill="none" stroke="#50575e" stroke-width="1.150"/></svg>
<div class="abs" style="left:342.500px;top:1510.0px;width:832.500px;height:37.500px;background:#fff;border-bottom:1px solid #eee"></div>
<span class="t" style="left:351px;top:1523.5px;font-size:10.200px;font-weight:bold;color:#1d2327;letter-spacing:-0.1px">#1598</span><div class="inp" style="left:382px;top:1517.8px;width:87px;height:21.500px"></div><span class="t" style="left:388.500px;top:1523.8px;font-size:10px;color:#50575e">S</span><svg class="abs" style="left:454.5px;top:1526.3px;width:8px;height:5.500px" viewBox="0 0 8 5.500"><path d="M0.800 0.900L4 4.200L7.200 0.900" fill="none" stroke="#50575e" stroke-width="1.150"/></svg><div class="inp" style="left:474.200px;top:1517.8px;width:144px;height:21.500px"></div><span class="t" style="left:480.700px;top:1523.8px;font-size:10px;color:#50575e">Brown</span><svg class="abs" style="left:603.5px;top:1526.3px;width:8px;height:5.500px" viewBox="0 0 8 5.500"><path d="M0.800 0.900L4 4.200L7.200 0.900" fill="none" stroke="#50575e" stroke-width="1.150"/></svg><div class="abs" style="left:1079.500px;top:1527.1px;width:8.300px;height:5.400px;border-top:1px solid #999;border-bottom:1px solid #999"><div style="margin-top:1.200px;height:1px;background:#999"></div></div><span class="t" style="left:1100.300px;top:1525.3px;font-size:9px;color:#f00">Remove</span><span class="t" style="left:1144px;top:1525.3px;font-size:9px;color:#2271b1">Edit</span>
<div class="abs" style="left:342.500px;top:1547.5px;width:832.500px;height:37.500px;background:#fff;border-bottom:1px solid #eee"></div>
<span class="t" style="left:351px;top:1561.0px;font-size:10.200px;font-weight:bold;color:#1d2327;letter-spacing:-0.1px">#1599</span><div class="inp" style="left:382px;top:1555.3px;width:87px;height:21.500px"></div><span class="t" style="left:388.500px;top:1561.3px;font-size:10px;color:#50575e">S</span><svg class="abs" style="left:454.5px;top:1563.8px;width:8px;height:5.500px" viewBox="0 0 8 5.500"><path d="M0.800 0.900L4 4.200L7.200 0.900" fill="none" stroke="#50575e" stroke-width="1.150"/></svg><div class="inp" style="left:474.200px;top:1555.3px;width:144px;height:21.500px"></div><span class="t" style="left:480.700px;top:1561.3px;font-size:10px;color:#50575e">Gray</span><svg class="abs" style="left:603.5px;top:1563.8px;width:8px;height:5.500px" viewBox="0 0 8 5.500"><path d="M0.800 0.900L4 4.200L7.200 0.900" fill="none" stroke="#50575e" stroke-width="1.150"/></svg><div class="abs" style="left:1079.500px;top:1564.6px;width:8.300px;height:5.400px;border-top:1px solid #999;border-bottom:1px solid #999"><div style="margin-top:1.200px;height:1px;background:#999"></div></div><span class="t" style="left:1100.300px;top:1562.8px;font-size:9px;color:#f00">Remove</span><span class="t" style="left:1144px;top:1562.8px;font-size:9px;color:#2271b1">Edit</span>
<div class="abs" style="left:342.500px;top:1585.1px;width:832.500px;height:37.500px;background:#fff;border-bottom:1px solid #eee"></div>
<span class="t" style="left:351px;top:1598.6px;font-size:10.200px;font-weight:bold;color:#1d2327;letter-spacing:-0.1px">#1600</span><div class="inp" style="left:382px;top:1592.9px;width:87px;height:21.500px"></div><span class="t" style="left:388.500px;top:1598.9px;font-size:10px;color:#50575e">M</span><svg class="abs" style="left:454.5px;top:1601.4px;width:8px;height:5.500px" viewBox="0 0 8 5.500"><path d="M0.800 0.900L4 4.200L7.200 0.900" fill="none" stroke="#50575e" stroke-width="1.150"/></svg><div class="inp" style="left:474.200px;top:1592.9px;width:144px;height:21.500px"></div><span class="t" style="left:480.700px;top:1598.9px;font-size:10px;color:#50575e">Black</span><svg class="abs" style="left:603.5px;top:1601.4px;width:8px;height:5.500px" viewBox="0 0 8 5.500"><path d="M0.800 0.900L4 4.200L7.200 0.900" fill="none" stroke="#50575e" stroke-width="1.150"/></svg><div class="abs" style="left:1079.500px;top:1602.2px;width:8.300px;height:5.400px;border-top:1px solid #999;border-bottom:1px solid #999"><div style="margin-top:1.200px;height:1px;background:#999"></div></div><span class="t" style="left:1100.300px;top:1600.4px;font-size:9px;color:#f00">Remove</span><span class="t" style="left:1144px;top:1600.4px;font-size:9px;color:#2271b1">Edit</span>
<div class="abs" style="left:342.500px;top:1622.7px;width:832.500px;height:37.500px;background:#fff;border-bottom:1px solid #eee"></div>
<span class="t" style="left:351px;top:1636.2px;font-size:10.200px;font-weight:bold;color:#1d2327;letter-spacing:-0.1px">#1601</span><div class="inp" style="left:382px;top:1630.5px;width:87px;height:21.500px"></div><span class="t" style="left:388.500px;top:1636.5px;font-size:10px;color:#50575e">M</span><svg class="abs" style="left:454.5px;top:1639.0px;width:8px;height:5.500px" viewBox="0 0 8 5.500"><path d="M0.800 0.900L4 4.200L7.200 0.900" fill="none" stroke="#50575e" stroke-width="1.150"/></svg><div class="inp" style="left:474.200px;top:1630.5px;width:144px;height:21.500px"></div><span class="t" style="left:480.700px;top:1636.5px;font-size:10px;color:#50575e">Brown</span><svg class="abs" style="left:603.5px;top:1639.0px;width:8px;height:5.500px" viewBox="0 0 8 5.500"><path d="M0.800 0.900L4 4.200L7.200 0.900" fill="none" stroke="#50575e" stroke-width="1.150"/></svg><div class="abs" style="left:1079.500px;top:1639.8px;width:8.300px;height:5.400px;border-top:1px solid #999;border-bottom:1px solid #999"><div style="margin-top:1.200px;height:1px;background:#999"></div></div><span class="t" style="left:1100.300px;top:1638.0px;font-size:9px;color:#f00">Remove</span><span class="t" style="left:1144px;top:1638.0px;font-size:9px;color:#2271b1">Edit</span>
<div class="abs" style="left:342.500px;top:1660.2px;width:832.500px;height:37.500px;background:#fff;border-bottom:1px solid #eee"></div>
<span class="t" style="left:351px;top:1673.7px;font-size:10.200px;font-weight:bold;color:#1d2327;letter-spacing:-0.1px">#1602</span><div class="inp" style="left:382px;top:1668.0px;width:87px;height:21.500px"></div><span class="t" style="left:388.500px;top:1674.0px;font-size:10px;color:#50575e">M</span><svg class="abs" style="left:454.5px;top:1676.5px;width:8px;height:5.500px" viewBox="0 0 8 5.500"><path d="M0.800 0.900L4 4.200L7.200 0.900" fill="none" stroke="#50575e" stroke-width="1.150"/></svg><div class="inp" style="left:474.200px;top:1668.0px;width:144px;height:21.500px"></div><span class="t" style="left:480.700px;top:1674.0px;font-size:10px;color:#50575e">Gray</span><svg class="abs" style="left:603.5px;top:1676.5px;width:8px;height:5.500px" viewBox="0 0 8 5.500"><path d="M0.800 0.900L4 4.200L7.200 0.900" fill="none" stroke="#50575e" stroke-width="1.150"/></svg><div class="abs" style="left:1079.500px;top:1677.3px;width:8.300px;height:5.400px;border-top:1px solid #999;border-bottom:1px solid #999"><div style="margin-top:1.200px;height:1px;background:#999"></div></div><span class="t" style="left:1100.300px;top:1675.5px;font-size:9px;color:#f00">Remove</span><span class="t" style="left:1144px;top:1675.5px;font-size:9px;color:#2271b1">Edit</span>
<div class="abs" style="left:342.500px;top:1697.8px;width:832.500px;height:37.500px;background:#fff;border-bottom:1px solid #eee"></div>
<span class="t" style="left:351px;top:1711.2px;font-size:10.200px;font-weight:bold;color:#1d2327;letter-spacing:-0.1px">#1603</span><div class="inp" style="left:382px;top:1705.5px;width:87px;height:21.500px"></div><span class="t" style="left:388.500px;top:1711.5px;font-size:10px;color:#50575e">L</span><svg class="abs" style="left:454.5px;top:1714.0px;width:8px;height:5.500px" viewBox="0 0 8 5.500"><path d="M0.800 0.900L4 4.200L7.200 0.900" fill="none" stroke="#50575e" stroke-width="1.150"/></svg><div class="inp" style="left:474.200px;top:1705.5px;width:144px;height:21.500px"></div><span class="t" style="left:480.700px;top:1711.5px;font-size:10px;color:#50575e">Black</span><svg class="abs" style="left:603.5px;top:1714.0px;width:8px;height:5.500px" viewBox="0 0 8 5.500"><path d="M0.800 0.900L4 4.200L7.200 0.900" fill="none" stroke="#50575e" stroke-width="1.150"/></svg><div class="abs" style="left:1079.500px;top:1714.8px;width:8.300px;height:5.400px;border-top:1px solid #999;border-bottom:1px solid #999"><div style="margin-top:1.200px;height:1px;background:#999"></div></div><span class="t" style="left:1100.300px;top:1713.0px;font-size:9px;color:#f00">Remove</span><span class="t" style="left:1144px;top:1713.0px;font-size:9px;color:#2271b1">Edit</span>
<div class="abs" style="left:342.500px;top:1735.3px;width:832.500px;height:37.500px;background:#fff;border-bottom:1px solid #eee"></div>
<span class="t" style="left:351px;top:1748.8px;font-size:10.200px;font-weight:bold;color:#1d2327;letter-spacing:-0.1px">#1604</span><div class="inp" style="left:382px;top:1743.1px;width:87px;height:21.500px"></div><span class="t" style="left:388.500px;top:1749.1px;font-size:10px;color:#50575e">L</span><svg class="abs" style="left:454.5px;top:1751.6px;width:8px;height:5.500px" viewBox="0 0 8 5.500"><path d="M0.800 0.900L4 4.200L7.200 0.900" fill="none" stroke="#50575e" stroke-width="1.150"/></svg><div class="inp" style="left:474.200px;top:1743.1px;width:144px;height:21.500px"></div><span class="t" style="left:480.700px;top:1749.1px;font-size:10px;color:#50575e">Brown</span><svg class="abs" style="left:603.5px;top:1751.6px;width:8px;height:5.500px" viewBox="0 0 8 5.500"><path d="M0.800 0.900L4 4.200L7.200 0.900" fill="none" stroke="#50575e" stroke-width="1.150"/></svg><div class="abs" style="left:1079.500px;top:1752.4px;width:8.300px;height:5.400px;border-top:1px solid #999;border-bottom:1px solid #999"><div style="margin-top:1.200px;height:1px;background:#999"></div></div><span class="t" style="left:1100.300px;top:1750.6px;font-size:9px;color:#f00">Remove</span><span class="t" style="left:1144px;top:1750.6px;font-size:9px;color:#2271b1">Edit</span>
<div class="abs" style="left:342.500px;top:1772.8px;width:832.500px;height:37.500px;background:#fff;border-bottom:1px solid #eee"></div>
<span class="t" style="left:351px;top:1786.3px;font-size:10.200px;font-weight:bold;color:#1d2327;letter-spacing:-0.1px">#1605</span><div class="inp" style="left:382px;top:1780.6px;width:87px;height:21.500px"></div><span class="t" style="left:388.500px;top:1786.6px;font-size:10px;color:#50575e">L</span><svg class="abs" style="left:454.5px;top:1789.1px;width:8px;height:5.500px" viewBox="0 0 8 5.500"><path d="M0.800 0.900L4 4.200L7.200 0.900" fill="none" stroke="#50575e" stroke-width="1.150"/></svg><div class="inp" style="left:474.200px;top:1780.6px;width:144px;height:21.500px"></div><span class="t" style="left:480.700px;top:1786.6px;font-size:10px;color:#50575e">Gray</span><svg class="abs" style="left:603.5px;top:1789.1px;width:8px;height:5.500px" viewBox="0 0 8 5.500"><path d="M0.800 0.900L4 4.200L7.200 0.900" fill="none" stroke="#50575e" stroke-width="1.150"/></svg><div class="abs" style="left:1079.500px;top:1789.9px;width:8.300px;height:5.400px;border-top:1px solid #999;border-bottom:1px solid #999"><div style="margin-top:1.200px;height:1px;background:#999"></div></div><span class="t" style="left:1100.300px;top:1788.1px;font-size:9px;color:#f00">Remove</span><span class="t" style="left:1144px;top:1788.1px;font-size:9px;color:#2271b1">Edit</span>
<div class="abs" style="left:342.500px;top:1810.500px;width:832.500px;height:37px;background:#fff"></div>
<div class="btn1" style="left:350.500px;top:1817.500px;width:73px;height:22px;font-size:9.200px;line-height:20px">Save changes</div>
<div class="btn2" style="left:427px;top:1817.500px;width:44.500px;height:22px;font-size:9.200px;line-height:20px">Cancel</div>
<span class="t" style="right:246.700px;top:1822.500px;font-size:8.500px;font-style:italic;color:#777">9 variations <span style="color:#2271b1">(Expand / Close)</span></span>
<div class="box" style="left:132.400px;top:1862px;width:1043.500px;height:28px"><span class="t" style="left:8.500px;top:8.500px;font-weight:bold;font-size:10.200px;color:#1d2327;letter-spacing:-0.25px">Product short description</span></div>
<span class="tip" style="left:270.0px;top:1871.5px">?</span>
<svg class="abs" style="left:1123.0px;top:1873.0px;width:10px;height:7px" viewBox="0 0 10 7"><path d="M1 5.800L5 1.700L9 5.800" fill="none" stroke="#646970" stroke-width="1.300"/></svg><svg class="abs" style="left:1141.7px;top:1873.0px;width:10px;height:7px" viewBox="0 0 10 7"><path d="M1 1.200L5 5.300L9 1.200" fill="none" stroke="#646970" stroke-width="1.300"/></svg><span class="abs" style="left:1163.3px;top:1874.5px;border:3px solid transparent;border-top:4.500px solid #50575e;border-bottom:0"></span>
<div class="box" style="left:132.400px;top:1904px;width:1043.500px;height:28px"><span class="t" style="left:8.500px;top:8.500px;font-weight:bold;font-size:10.200px;color:#1d2327;letter-spacing:-0.25px">Reviews</span></div>
<svg class="abs" style="left:1123.0px;top:1915.0px;width:10px;height:7px" viewBox="0 0 10 7"><path d="M1 5.800L5 1.700L9 5.800" fill="none" stroke="#646970" stroke-width="1.300"/></svg><svg class="abs" style="left:1141.7px;top:1915.0px;width:10px;height:7px" viewBox="0 0 10 7"><path d="M1 1.200L5 5.300L9 1.200" fill="none" stroke="#646970" stroke-width="1.300"/></svg><span class="abs" style="left:1163.3px;top:1916.5px;border:3px solid transparent;border-top:4.500px solid #50575e;border-bottom:0"></span>
<div class="box" style="left:1191.400px;top:114px;width:205.200px;height:226px"><div class="hd" style="height:27.2px"></div><span class="t" style="left:8.500px;top:8.1px;font-weight:bold;font-size:10.200px;color:#1d2327;letter-spacing:-0.25px">Publish</span></div><svg class="abs" style="left:1343.4px;top:124.4px;width:10px;height:7px" viewBox="0 0 10 7"><path d="M1 5.800L5 1.700L9 5.800" fill="none" stroke="#646970" stroke-width="1.300"/></svg><svg class="abs" style="left:1362.5px;top:124.4px;width:10px;height:7px" viewBox="0 0 10 7"><path d="M1 1.200L5 5.300L9 1.200" fill="none" stroke="#646970" stroke-width="1.300"/></svg><span class="abs" style="left:1383.7px;top:125.4px;border:3px solid transparent;border-bottom:4.500px solid #50575e;border-top:0"></span>
<div class="btn2" style="left:1301px;top:149.200px;width:88px;height:22.300px;font-size:9.100px;line-height:20px">Preview Changes</div>
<svg class="abs" style="left:1201.500px;top:181px;width:9px;height:12px" viewBox="0 0 9 12"><circle cx="4.500" cy="3" r="2.600" fill="#8c8f94"/><rect x="3.900" y="5" width="1.300" height="6.500" fill="#8c8f94"/></svg>
<span class="t" style="left:1218px;top:182px;font-size:9.400px;color:#3c434a">Status: <b style="font-size:8.800px">Published</b> <a>Edit</a></span>
<svg class="abs" style="left:1199px;top:207px;width:13px;height:10px" viewBox="0 0 13 10"><path d="M0.500 5C2 2 4 0.800 6.500 0.800S11 2 12.500 5C11 8 9 9.200 6.500 9.200S2 8 0.500 5z" fill="none" stroke="#8c8f94" stroke-width="1.100"/><circle cx="6.500" cy="5" r="2.300" fill="#8c8f94"/></svg>
<span class="t" style="left:1218px;top:207px;font-size:9.400px;color:#3c434a">Visibility: <b style="font-size:9.100px">Public</b> <a>Edit</a></span>
<svg class="abs" style="left:1199.500px;top:230.500px;width:12px;height:12.500px" viewBox="0 0 12 12.500"><path d="M0.500 2h11v10h-11zM1.800 4.800v6h8.400v-6z" fill="#8c8f94" fill-rule="evenodd"/><rect x="2.500" y="0" width="1.500" height="3" fill="#8c8f94"/><rect x="5.300" y="0" width="1.500" height="3" fill="#8c8f94"/><rect x="8" y="0" width="1.500" height="3" fill="#8c8f94"/><rect x="3" y="6" width="1.200" height="4" fill="#8c8f94"/><rect x="5.400" y="6" width="1.200" height="4" fill="#8c8f94"/><rect x="7.800" y="6" width="1.200" height="4" fill="#8c8f94"/></svg>
<span class="t" style="left:1218px;top:232px;font-size:9.400px;color:#3c434a">Published on: <b style="font-size:9px">Dec 12, 2023 at 08:00</b> <a>Edit</a></span>
<span class="t" style="left:1199px;top:256.800px;font-size:9.450px;color:#3c434a">Catalog visibility: <b style="font-size:9px">Shop and search results</b></span>
<span class="t" style="left:1199px;top:269.800px;font-size:9.600px;color:#3c434a"><a>Edit</a></span>
<div class="abs" style="left:1192.500px;top:287px;width:203px;height:52px;background:#f6f7f7;border-top:1px solid #dcdcde"></div>
<span class="t" style="left:1199px;top:298px;font-size:9.600px;color:#3c434a"><a>Copy to a new draft</a></span>
<span class="t" style="left:1199px;top:314.800px;font-size:9.600px;color:#3c434a"><a style="color:#b32d2e">Move to Trash</a></span>
<div class="btn1" style="left:1339px;top:308.700px;width:50px;height:23.300px;font-size:9.500px;line-height:21.300px">Update</div>
<div class="box" style="left:1191.400px;top:355px;width:205.200px;height:307px"><div class="hd" style="height:27.2px"></div><span class="t" style="left:8.500px;top:8.1px;font-weight:bold;font-size:10.200px;color:#1d2327;letter-spacing:-0.25px">Product image</span></div><svg class="abs" style="left:1343.4px;top:365.4px;width:10px;height:7px" viewBox="0 0 10 7"><path d="M1 5.800L5 1.700L9 5.800" fill="none" stroke="#646970" stroke-width="1.300"/></svg><svg class="abs" style="left:1362.5px;top:365.4px;width:10px;height:7px" viewBox="0 0 10 7"><path d="M1 1.200L5 5.300L9 1.200" fill="none" stroke="#646970" stroke-width="1.300"/></svg><span class="abs" style="left:1383.7px;top:366.4px;border:3px solid transparent;border-bottom:4.500px solid #50575e;border-top:0"></span>
<div class="abs" style="left:1199px;top:390.500px;width:191px;height:190.500px;background:#e9eef3"></div>
<svg class="abs" style="left:1225px;top:445px;width:140px;height:85px" viewBox="0 0 1412 857">
<g stroke="#3e2c20" stroke-width="5.500" stroke-linejoin="round">
<!-- back inner surface -->
<path d="M190 250C260 200 480 150 700 132C900 118 1120 118 1200 160C1240 185 1235 215 1200 240C1100 300 850 375 600 402C500 410 420 405 380 395C300 370 200 320 190 250z" fill="#d6ab88"/>
<!-- lighter inner lower -->
<path d="M380 395C480 340 700 275 900 235C1050 210 1150 205 1205 225C1190 255 1100 300 850 375C700 400 500 412 380 395z" fill="#e4bf9f"/>
<!-- front band -->
<path d="M160 300C165 270 175 255 190 250C200 320 300 370 380 395C500 412 700 400 850 375C1100 300 1225 240 1235 190C1265 230 1275 300 1262 390C1230 430 1150 470 1085 495L1060 395C990 390 900 400 850 412C780 430 720 455 700 440C640 440 560 480 435 528C330 520 220 490 165 460C160 400 158 350 160 300z" fill="#e5c3a3"/>
<!-- lower strap with holes -->
<path d="M135 475C140 462 150 455 165 460C220 490 330 520 435 528L445 735C380 735 250 710 170 650C140 610 130 540 135 475z" fill="#e6c4a5"/>
<!-- strap through buckle -->
<path d="M490 545C600 500 750 445 850 412C900 400 990 390 1060 395L1085 495C1060 540 1000 580 940 605C880 630 800 660 760 670C680 690 600 705 520 712z" fill="#e6c5a6"/>
<!-- keeper -->
<path d="M850 412C860 400 880 398 893 402L978 590C970 605 950 612 935 608z" fill="#e2bd9c"/>
<!-- buckle -->
<path d="M435 528C520 490 620 450 695 440C710 445 715 460 712 472C640 490 560 515 498 545L520 700L762 652C770 662 768 680 760 688L472 737C455 735 448 725 445 700z" fill="#b9b9b7" stroke="#6a6a68"/>
<path d="M462 620L540 612L542 640L465 648z" fill="#c9c9c7" stroke="#6a6a68" stroke-width="2.500"/>
</g>
<g fill="#8a6a50" stroke="#4a3426" stroke-width="2">
<ellipse cx="160" cy="565" rx="9" ry="16"/><ellipse cx="245" cy="600" rx="10" ry="17"/><ellipse cx="348" cy="620" rx="12" ry="20"/><ellipse cx="655" cy="598" rx="11" ry="20"/><ellipse cx="533" cy="618" rx="8" ry="16"/>
</g>
</svg>

<span class="tip" style="left:1207.2px;top:585.0px">?</span>
<span class="t" style="left:1199px;top:614px;font-size:9.650px;color:#646970">Click the image to edit or update</span>
<span class="t" style="left:1199px;top:642.500px;font-size:9.600px;color:#3c434a"><a style="color:#b32d2e">Remove product image</a></span>
<div class="box" style="left:1191.400px;top:677px;width:205.200px;height:61px"><div class="hd" style="height:27px"></div><span class="t" style="left:8.500px;top:8.0px;font-weight:bold;font-size:10.200px;color:#1d2327;letter-spacing:-0.25px">Product gallery</span></div><svg class="abs" style="left:1343.4px;top:687.3px;width:10px;height:7px" viewBox="0 0 10 7"><path d="M1 5.800L5 1.700L9 5.800" fill="none" stroke="#646970" stroke-width="1.300"/></svg><svg class="abs" style="left:1362.5px;top:687.3px;width:10px;height:7px" viewBox="0 0 10 7"><path d="M1 1.200L5 5.300L9 1.200" fill="none" stroke="#646970" stroke-width="1.300"/></svg><span class="abs" style="left:1383.7px;top:688.3px;border:3px solid transparent;border-bottom:4.500px solid #50575e;border-top:0"></span>
<span class="t" style="left:1200.500px;top:717px;font-size:9.600px;color:#3c434a"><a>Add product gallery images</a></span>
<span class="tip" style="left:1325.3px;top:717.2px">?</span>
<div class="box" style="left:1191.400px;top:754px;width:205.200px;height:239.3px"><div class="hd" style="height:26px"></div><span class="t" style="left:8.500px;top:7.5px;font-weight:bold;font-size:10.200px;color:#1d2327;letter-spacing:-0.25px">Product categories</span></div><svg class="abs" style="left:1343.4px;top:763.8px;width:10px;height:7px" viewBox="0 0 10 7"><path d="M1 5.800L5 1.700L9 5.800" fill="none" stroke="#646970" stroke-width="1.300"/></svg><svg class="abs" style="left:1362.5px;top:763.8px;width:10px;height:7px" viewBox="0 0 10 7"><path d="M1 1.200L5 5.300L9 1.200" fill="none" stroke="#646970" stroke-width="1.300"/></svg><span class="abs" style="left:1383.7px;top:764.8px;border:3px solid transparent;border-bottom:4.500px solid #50575e;border-top:0"></span>
<div class="abs" style="left:1201px;top:807.300px;width:186px;height:148px;background:#fff;border:1px solid #dcdcde"></div>
<div class="abs" style="left:1201px;top:787px;width:64.600px;height:21.300px;background:#fff;border:1px solid #dcdcde;border-bottom:0"></div>
<span class="t" style="left:1205px;top:792px;font-size:9.500px;color:#3c434a">All categories</span>
<span class="t" style="left:1273.500px;top:792px;font-size:9.500px;color:#2271b1">Most Used</span>
<div class="abs" style="left:1202px;top:808.300px;width:172px;height:4px;overflow:hidden"><span class="cb" style="left:8px;top:-8px"></span><span class="t" style="left:25.500px;top:-5.300px;font-size:9.500px;color:#3c434a">Clothing</span></div>
<span class="cb" style="left:1223.4px;top:817.6px"></span><svg class="abs" style="left:1224.9px;top:819.1px;width:9.500px;height:9px" viewBox="0 0 10 9"><path d="M1.300 4.800L3.800 7.300L8.800 1.200" fill="none" stroke="#3582c4" stroke-width="1.900"/></svg>
<span class="t" style="left:1240.800px;top:819.700px;font-size:9.200px;color:#3c434a">Accessories</span>
<span class="cb" style="left:1210px;top:835.5px"></span>
<span class="t" style="left:1227.500px;top:837.7px;font-size:9.200px;color:#3c434a">Decor</span>
<span class="cb" style="left:1210px;top:852.8px"></span>
<span class="t" style="left:1227.500px;top:855.0px;font-size:9.200px;color:#3c434a">eBooks</span>
<span class="cb" style="left:1210px;top:870.2px"></span>
<span class="t" style="left:1227.500px;top:872.4px;font-size:9.200px;color:#3c434a">Electronics</span>
<span class="cb" style="left:1210px;top:887.5px"></span>
<span class="t" style="left:1227.500px;top:889.7px;font-size:9.200px;color:#3c434a">Fast Food</span>
<span class="cb" style="left:1210px;top:905px"></span>
<span class="t" style="left:1227.500px;top:907.2px;font-size:9.200px;color:#3c434a">HeadPhones</span>
<span class="cb" style="left:1210px;top:922.5px"></span>
<span class="t" style="left:1227.500px;top:924.7px;font-size:9.200px;color:#3c434a">Hoodies</span>
<div class="abs" style="left:1202px;top:938.8px;width:172px;height:15.5px;overflow:hidden"><span class="cb" style="left:8px;top:1px"></span><span class="t" style="left:25.500px;top:3.200px;font-size:9.200px;color:#3c434a">Music</span></div>
<div class="abs" style="left:1374.300px;top:808.300px;width:11.700px;height:146px;background:#f1f1f1"></div>
<div class="abs" style="left:1375.700px;top:830px;width:9.300px;height:67.600px;background:#c1c1c1"></div>
<span class="abs" style="left:1377.500px;top:813.300px;border:2.700px solid transparent;border-bottom:3px solid #505050;border-top:0"></span>
<span class="abs" style="left:1377.500px;top:946.500px;border:2.700px solid transparent;border-top:3px solid #505050;border-bottom:0"></span>
<span class="t" style="left:1200.500px;top:965.500px;font-size:10.100px;color:#2271b1"><a>+ Add new category</a></span>
<div class="box" style="left:1191.400px;top:1008px;width:205.200px;height:27.5px"><span class="t" style="left:8.500px;top:8.2px;font-weight:bold;font-size:10.200px;color:#1d2327;letter-spacing:-0.25px">Product tags</span></div><svg class="abs" style="left:1343.4px;top:1018.5px;width:10px;height:7px" viewBox="0 0 10 7"><path d="M1 5.800L5 1.700L9 5.800" fill="none" stroke="#646970" stroke-width="1.300"/></svg><svg class="abs" style="left:1362.5px;top:1018.5px;width:10px;height:7px" viewBox="0 0 10 7"><path d="M1 1.200L5 5.300L9 1.200" fill="none" stroke="#646970" stroke-width="1.300"/></svg><span class="abs" style="left:1383.7px;top:1020.0px;border:3px solid transparent;border-top:4.500px solid #50575e;border-bottom:0"></span>
</body>
</html>
